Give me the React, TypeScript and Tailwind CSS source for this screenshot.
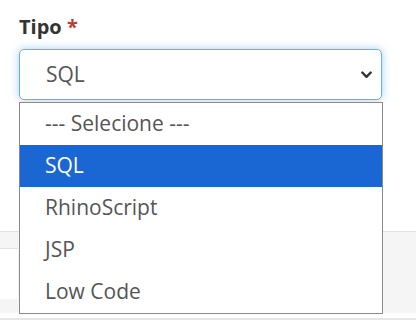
export default function App() {
  const options = ["--- Selecione ---", "SQL", "RhinoScript", "JSP", "Low Code"];
  const selected = "SQL";

  return (
    <div className="relative w-[416px] h-[328px] overflow-hidden bg-white font-['Open_Sans',sans-serif]">
      {/* form field */}
      <div className="pl-[19px] pr-[34px] pt-[13px]">
        <label className="block text-[20px] font-bold leading-[28px] text-[#333]">
          Tipo <span className="text-[#c0392b]">*</span>
        </label>
        <div className="mt-[8px] flex h-[51px] items-center justify-between rounded-[5px] border border-[#66afe9] pl-[26px] pr-[9px] shadow-[0_0_8px_rgba(102,175,233,0.6)]">
          <span className="text-[21px] text-[#555]">SQL</span>
          <svg width="11" height="8" viewBox="0 0 11 8">
            <path d="M1.3 1.5 L5.5 5.8 L9.7 1.5" fill="none" stroke="#333" strokeWidth="2.4" strokeLinecap="round" strokeLinejoin="round" />
          </svg>
        </div>
      </div>

      {/* table behind the open list */}
      <div className="mt-[131px] border-t border-[#e2e2e2]">
        <div className="flex h-[81px]">
          <div className="flex w-[18px] flex-col">
            <div className="h-[17px] bg-[#f5f5f5] border-b border-[#e2e2e2]" />
            <div className="h-[50px] bg-white" />
            <div className="h-[14px] bg-[#f5f5f5]" />
          </div>
          <div className="flex-1 bg-[#f5f5f5]" />
        </div>
        <div className="mt-[5px] border-t-[2px] border-[#e6e6e6]" />
      </div>

      {/* open dropdown list */}
      <div className="absolute left-[19px] top-[102px] w-[364px] border border-[#8a8a8a] bg-white">
        {options.map((o) => (
          <div
            key={o}
            className={
              o === selected
                ? "flex h-[42px] items-center bg-[#1a66d2] pl-[25px] text-[21px] text-white"
                : "flex h-[42px] items-center pl-[25px] text-[21px] text-[#555]"
            }
          >
            {o}
          </div>
        ))}
      </div>
    </div>
  );
}
